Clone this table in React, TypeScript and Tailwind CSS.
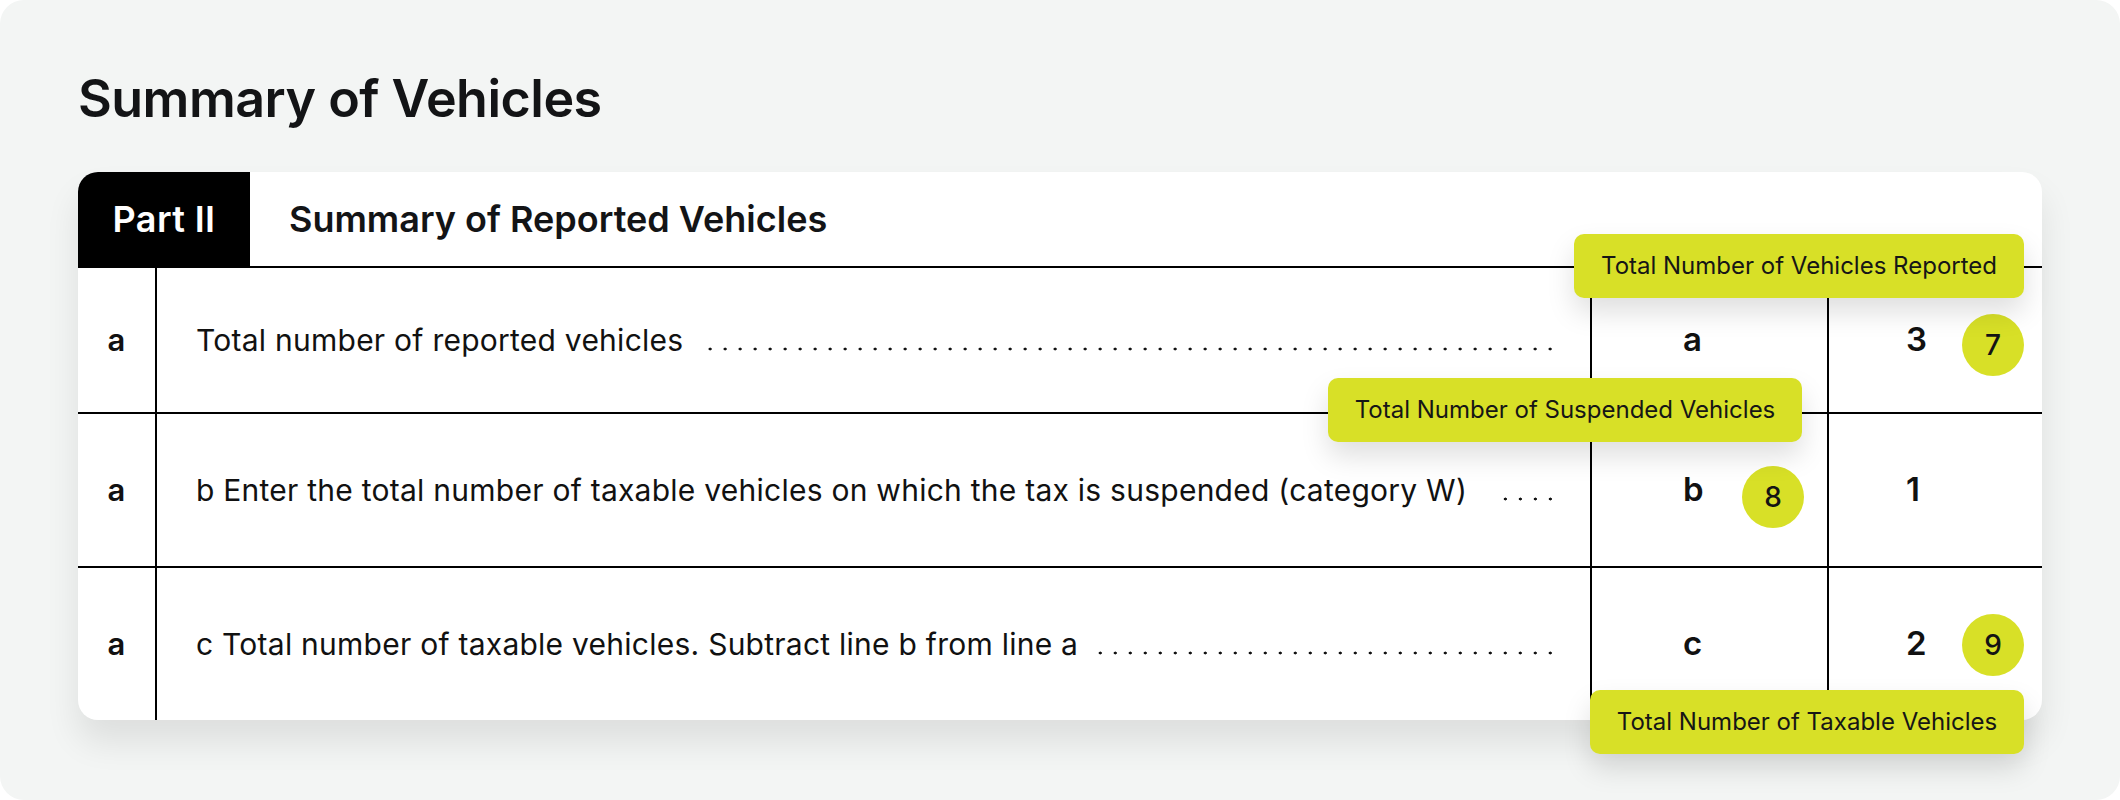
const rows = [
  {
    text: 'Total number of reported vehicles',
    line: 'a',
    value: '3',
    lead: 'ml-[14px]',
    h: 'h-[146px]',
  },
  {
    text: 'b Enter the total number of taxable vehicles on which the tax is suspended (category W)',
    line: 'b',
    value: '1',
    lead: 'ml-[36px]',
    h: 'h-[154px]',
  },
  {
    text: 'c Total number of taxable vehicles. Subtract line b from line a',
    line: 'c',
    value: '2',
    lead: 'ml-[14px]',
    h: 'h-[152px]',
  },
]

function Badge({ n, className }: { n: string; className: string }) {
  return (
    <div
      className={`absolute w-[62px] h-[62px] rounded-full bg-[#d8e027] flex items-center justify-center text-[28px] font-medium text-[#141414] ${className}`}>
      {n}
    </div>
  )
}

function Tip({ label, className }: { label: string; className: string }) {
  return (
    <div
      className={`absolute h-[64px] rounded-[10px] bg-[#d8e027] flex items-center justify-center whitespace-nowrap text-[24px] text-[#161616] shadow-[0_14px_28px_rgba(0,0,0,0.13)] ${className}`}>
      {label}
    </div>
  )
}

export default function App() {
  return (
    <div className="w-[2120px] h-[800px] bg-white" style={{ fontFamily: 'Inter, "Noto Sans", sans-serif' }}>
      <div className="h-full rounded-[24px] bg-[#f3f5f4] px-[78px] pt-[73px]">
        <h1 className="text-[52px] leading-none font-semibold text-[#131416] tracking-[-0.01em]">
          Summary of Vehicles
        </h1>

        <div className="relative mt-[47px] rounded-[20px] bg-white text-[#111] shadow-[0_22px_34px_rgba(0,0,0,0.09)]">
          {/* header */}
          <div className="flex h-[96px] border-b-2 border-black">
            <div className="w-[172px] rounded-tl-[20px] bg-black text-white flex items-center justify-center text-[36px] font-semibold tracking-[0.01em]">
              Part II
            </div>
            <div className="pl-[39px] flex items-center text-[36px] font-semibold text-[#131416]">
              Summary of Reported Vehicles
            </div>
          </div>

          {rows.map((r, i) => (
            <div
              key={r.line}
              className={`grid grid-cols-[77px_1fr_237px_215px] ${r.h} ${i < rows.length - 1 ? 'border-b-2 border-black' : ''}`}>
              <div className="flex items-center justify-center text-[31px] font-semibold">a</div>
              <div className="border-l-2 border-black pl-[39px] pr-[32px] flex items-center">
                <div className="flex items-baseline w-full">
                  <span className="text-[30px] tracking-[0.25px] whitespace-nowrap">{r.text}</span>
                  <div
                    className={`flex-1 h-[4px] ${r.lead} bg-[radial-gradient(circle,#111_1.3px,transparent_1.7px)] bg-[length:15px_4px] bg-repeat-x bg-right`}
                  />
                </div>
              </div>
              <div className="relative border-l-2 border-black pl-[91px] flex items-center text-[33px] font-semibold">
                {r.line}
                {i === 1 && <Badge n="8" className="left-[150px] top-[52px]" />}
              </div>
              <div className="relative border-l-2 border-black pl-[77px] flex items-center text-[33px] font-semibold">
                {r.value}
                {i === 0 && <Badge n="7" className="right-[18px] top-[46px]" />}
                {i === 2 && <Badge n="9" className="right-[18px] top-[46px]" />}
              </div>
            </div>
          ))}

          <Tip label="Total Number of Vehicles Reported" className="left-[1496px] top-[62px] w-[450px]" />
          <Tip label="Total Number of Suspended Vehicles" className="left-[1250px] top-[206px] w-[474px]" />
          <Tip label="Total Number of Taxable Vehicles" className="left-[1512px] top-[518px] w-[434px]" />
        </div>
      </div>
    </div>
  )
}
